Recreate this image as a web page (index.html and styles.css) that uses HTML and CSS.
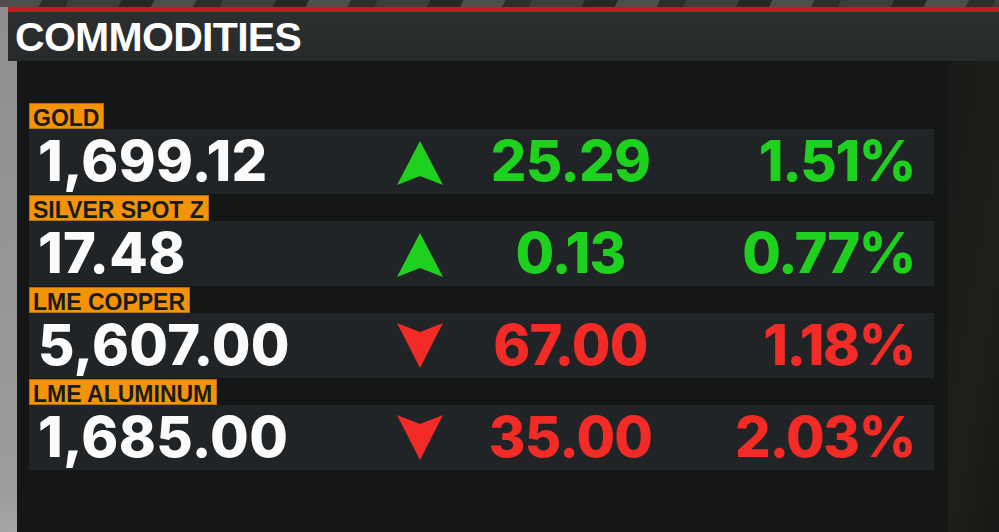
FILE: index.html
```html
<!DOCTYPE html>
<html lang="en">
<head>
<meta charset="utf-8">
<title>Commodities</title>
<link rel="stylesheet" href="styles.css">
</head>
<body>
<div class="screen">
  <div class="top-stripe"></div>
  <header class="titlebar"><h1>COMMODITIES</h1></header>
  <div class="stage">
    <main class="panel">
      <section class="item">
        <div class="label">GOLD</div>
        <div class="row">
          <div class="value">1,699.12</div>
          <div class="dir"><svg class="arrow up" viewBox="0 0 46 44"><path d="M23 0 L46 44 L23 35 L0 44 Z"/></svg></div>
          <div class="chg up">25.29</div>
          <div class="pct up">1.51%</div>
        </div>
      </section>
      <section class="item">
        <div class="label">SILVER SPOT Z</div>
        <div class="row">
          <div class="value">17.48</div>
          <div class="dir"><svg class="arrow up" viewBox="0 0 46 44"><path d="M23 0 L46 44 L23 35 L0 44 Z"/></svg></div>
          <div class="chg up">0.13</div>
          <div class="pct up">0.77%</div>
        </div>
      </section>
      <section class="item">
        <div class="label">LME COPPER</div>
        <div class="row">
          <div class="value">5,607.00</div>
          <div class="dir"><svg class="arrow down" viewBox="0 0 46 45"><path d="M0 0 L23 9 L46 0 L23 45 Z"/></svg></div>
          <div class="chg down">67.00</div>
          <div class="pct down">1.18%</div>
        </div>
      </section>
      <section class="item">
        <div class="label">LME ALUMINUM</div>
        <div class="row">
          <div class="value">1,685.00</div>
          <div class="dir"><svg class="arrow down" viewBox="0 0 46 45"><path d="M0 0 L23 9 L46 0 L23 45 Z"/></svg></div>
          <div class="chg down">35.00</div>
          <div class="pct down">2.03%</div>
        </div>
      </section>
    </main>
    <div class="side"></div>
  </div>
</div>
</body>
</html>
```
FILE: styles.css
```css
html, body {
  margin: 0;
  padding: 0;
  background: #151716;
}

.screen {
  width: 999px;
  height: 532px;
  overflow: hidden;
  display: flex;
  flex-direction: column;
  font-family: "Liberation Sans", Arial, Helvetica, sans-serif;
  font-weight: bold;
  background: linear-gradient(160deg, #8e8e8e 0%, #9c9c9c 55%, #c9c9c9 78%, #9a9a9a 100%);
}

.top-stripe {
  height: 7px;
  flex: none;
  background: repeating-linear-gradient(115deg, #4d4e4c 0 38px, #2c2d2c 38px 62px, #3d3e3c 62px 110px, #262726 110px 140px);
}

.titlebar {
  flex: none;
  height: 49px;
  margin-left: 8px;
  border-top: 5px solid #c51b1f;
  background: linear-gradient(180deg, #2c2f2f 0%, #272a2a 100%);
  display: flex;
  align-items: flex-start;
}

.titlebar h1 {
  margin: 0;
  padding: 3px 0 0 7px;
  font-size: 41px;
  line-height: 44px;
  letter-spacing: -0.7px;
  color: #ffffff;
  font-weight: bold;
}

.stage {
  flex: 1;
  display: flex;
  margin-left: 17px;
}

.panel {
  width: 931px;
  flex: none;
  background: #151716;
  padding: 42px 0 0 12px;
  box-sizing: border-box;
  display: flex;
  flex-direction: column;
  gap: 1px;
}

.side {
  flex: 1;
  background: linear-gradient(100deg, #181a17 0%, #1d1f1b 60%, #161815 100%);
}

.item {
  display: flex;
  flex-direction: column;
  align-items: flex-start;
}

.label {
  height: 26px;
  box-sizing: border-box;
  padding: 4px 5px 0 4px;
  font-size: 23px;
  line-height: 22px;
  color: #1a1a1a;
  background: #f39408;
  box-shadow: inset 0 0 0 1px #b86d06;
  white-space: nowrap;
}

.row {
  width: 905px;
  height: 65px;
  background: #212427;
  display: grid;
  grid-template-columns: 357px 68px 230px 1fr;
  align-items: center;
  font-family: Inter, "Liberation Sans", Arial, sans-serif;
  font-weight: 800;
  font-size: 56px;
  line-height: 65px;
  letter-spacing: -0.8px;
  white-space: nowrap;
}

.value {
  padding-left: 9px;
  color: #fbfbfb;
  letter-spacing: 0.3px;
}

.dir {
  display: flex;
  justify-content: center;
  align-items: center;
}

.arrow {
  width: 46px;
  height: 44px;
  display: block;
}

.arrow.up { fill: #1fd11f; margin-top: 2px; }
.arrow.down { fill: #f22b27; height: 45px; }

.chg {
  text-align: center;
  padding-left: 3px;
}

.pct {
  text-align: right;
  padding-right: 19px;
  letter-spacing: -1.4px;
}

.up { color: #1fd11f; }
.down { color: #f22b27; }
```
